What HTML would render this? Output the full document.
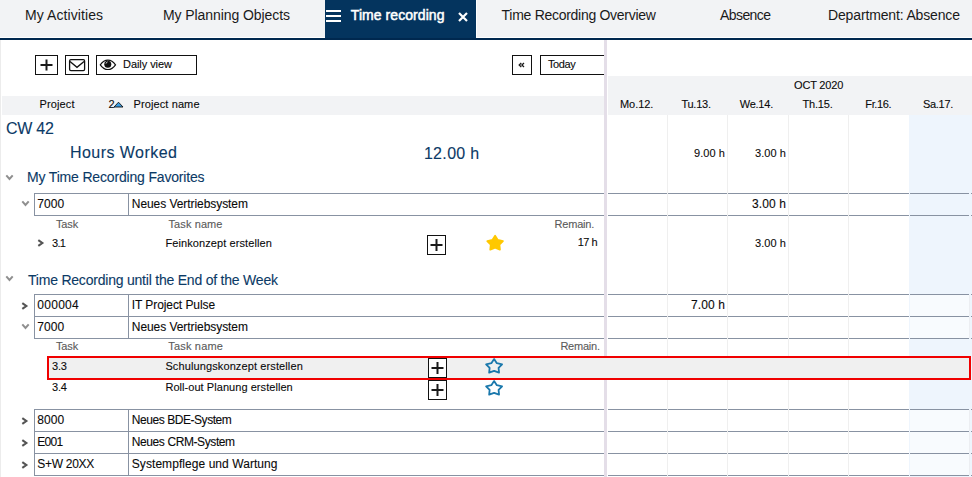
<!DOCTYPE html><html><head><meta charset="utf-8"><style>
html,body{margin:0;padding:0;width:972px;height:477px;overflow:hidden;background:#fff}
body{position:relative;font-family:"Liberation Sans",sans-serif}
div,span,svg{position:absolute}
.t{white-space:nowrap;line-height:1;-webkit-text-stroke:0.1px currentColor}
</style></head><body>
<div style="left:0px;top:0px;width:972px;height:37px;background:#f2f3f5"></div>
<div style="left:0px;top:37px;width:972px;height:1px;background:#ffffff"></div>
<div style="left:0px;top:38px;width:972px;height:2px;background:#00284f"></div>
<div style="left:325px;top:0px;width:151px;height:38px;background:#04345e"></div>
<div style="left:476px;top:0px;width:1px;height:37px;background:#ffffff"></div>
<span class="t" style="left:25.00px;top:8.15px;font-size:14px;color:#0a0a0a;letter-spacing:0.083px;-webkit-text-stroke:0;color:#1a1a1a">My Activities</span>
<span class="t" style="left:163.00px;top:8.15px;font-size:14px;color:#0a0a0a;letter-spacing:-0.078px;-webkit-text-stroke:0;color:#1a1a1a">My Planning Objects</span>
<span class="t" style="left:350.80px;top:8.35px;font-size:14px;color:#ffffff;letter-spacing:0.065px;-webkit-text-stroke:0.5px #fff;">Time recording</span>
<span class="t" style="left:501.60px;top:8.15px;font-size:14px;color:#0a0a0a;letter-spacing:-0.284px;-webkit-text-stroke:0;color:#1a1a1a">Time Recording Overview</span>
<span class="t" style="left:720.00px;top:8.15px;font-size:14px;color:#0a0a0a;letter-spacing:-0.583px;-webkit-text-stroke:0;color:#1a1a1a">Absence</span>
<span class="t" style="left:828.00px;top:8.15px;font-size:14px;color:#0a0a0a;letter-spacing:-0.147px;-webkit-text-stroke:0;color:#1a1a1a">Department: Absence</span>
<div style="left:326px;top:10px;width:15px;height:2px;background:#fff"></div>
<div style="left:326px;top:15px;width:15px;height:2px;background:#fff"></div>
<div style="left:326px;top:20px;width:15px;height:2px;background:#fff"></div>
<svg style="left:456px;top:10px" width="14" height="13" viewBox="0 0 14 13"><path d="M3 3L11 11M11 3L3 11" stroke="#fff" stroke-width="2.2"/></svg>
<div style="left:0px;top:40px;width:1px;height:437px;background:#ececec"></div>
<div style="left:35px;top:55px;width:23px;height:20px;border:1px solid #111;box-sizing:border-box"></div>
<svg style="left:35px;top:55px" width="23" height="20" viewBox="0 0 23 20"><path d="M11.5 4.5V15.5M5.5 10H17.5" stroke="#1a1a1a" stroke-width="2"/></svg>
<div style="left:65px;top:55px;width:24px;height:20px;border:1px solid #111;box-sizing:border-box"></div>
<svg style="left:65px;top:55px" width="24" height="20" viewBox="0 0 24 20"><rect x="4.6" y="4.6" width="15" height="11" rx="1.3" fill="none" stroke="#111" stroke-width="1.3"/><path d="M5 6.6L12 12.3L19 6.6" fill="none" stroke="#111" stroke-width="1.3"/></svg>
<div style="left:96px;top:55px;width:101px;height:20px;border:1px solid #111;box-sizing:border-box"></div>
<svg style="left:99px;top:58px" width="18" height="14" viewBox="0 0 18 14"><path d="M1.3 6.8C3.8 3.3 6.6 2.2 8.9 2.2S14 3.3 16.5 6.8C14 10.4 11.3 11.5 8.9 11.5S3.8 10.4 1.3 6.8Z" fill="none" stroke="#111" stroke-width="1.2"/><circle cx="8.8" cy="6.3" r="3.5" fill="#111"/><path d="M7 5.6A2 2 0 0 1 8.6 3.9" fill="none" stroke="#fff" stroke-width="0.8"/></svg>
<span class="t" style="left:123.00px;top:58.69px;font-size:11px;color:#0a0a0a;letter-spacing:-0.061px;">Daily view</span>
<div style="left:512px;top:55px;width:20px;height:20px;border:1px solid #111;box-sizing:border-box"></div>
<svg style="left:518px;top:62px" width="7" height="6" viewBox="0 0 7 6"><path d="M3.3 1L1.2 3L3.3 5M6 1L3.9 3L6 5" fill="none" stroke="#1a1a1a" stroke-width="1.3"/></svg>
<div style="left:540px;top:55px;width:64px;height:20px;border:1px solid #111;border-right:none;box-sizing:border-box"></div>
<span class="t" style="left:548.00px;top:58.69px;font-size:11px;color:#0a0a0a;letter-spacing:-0.413px;">Today</span>
<div style="left:2px;top:96px;width:602px;height:19px;background:#f2f3f5"></div>
<span class="t" style="left:39.50px;top:98.89px;font-size:11px;color:#0a0a0a;letter-spacing:0.125px;">Project</span>
<span class="t" style="left:108.50px;top:98.89px;font-size:11px;color:#0a0a0a;">2</span>
<svg style="left:113px;top:101px" width="11" height="7" viewBox="0 0 11 7"><path d="M1 6L5.5 1.2L10 6Z" fill="#3a9be0" stroke="#111" stroke-width="0.9"/></svg>
<span class="t" style="left:133.50px;top:98.89px;font-size:11px;color:#0a0a0a;letter-spacing:0.109px;">Project name</span>
<div style="left:608px;top:76px;width:364px;height:39px;background:#f2f3f5"></div>
<span class="t" style="left:794.00px;top:79.69px;font-size:11px;color:#0a0a0a;letter-spacing:-0.179px;">OCT 2020</span>
<div style="left:604px;top:40px;width:3px;height:437px;background:#e4dee8"></div>
<div style="left:909px;top:115px;width:63px;height:362px;background:#eef5fd"></div>
<div style="left:667px;top:115px;width:1px;height:362px;background:#efefef"></div>
<div style="left:727px;top:115px;width:1px;height:362px;background:#efefef"></div>
<div style="left:788px;top:115px;width:1px;height:362px;background:#efefef"></div>
<div style="left:848px;top:115px;width:1px;height:362px;background:#efefef"></div>
<span class="t" style="left:620.00px;top:98.89px;font-size:11px;color:#0a0a0a;letter-spacing:-0.070px;">Mo.12.</span>
<span class="t" style="left:681.40px;top:98.89px;font-size:11px;color:#0a0a0a;letter-spacing:-0.240px;">Tu.13.</span>
<span class="t" style="left:739.70px;top:98.89px;font-size:11px;color:#0a0a0a;letter-spacing:-0.230px;">We.14.</span>
<span class="t" style="left:802.40px;top:98.89px;font-size:11px;color:#0a0a0a;letter-spacing:-0.160px;">Th.15.</span>
<span class="t" style="left:865.30px;top:98.89px;font-size:11px;color:#0a0a0a;letter-spacing:-0.380px;">Fr.16.</span>
<span class="t" style="left:923.00px;top:98.89px;font-size:11px;color:#0a0a0a;letter-spacing:-0.300px;">Sa.17.</span>
<span class="t" style="left:5.90px;top:121.06px;font-size:16px;color:#0b3a66;letter-spacing:-0.250px;">CW 42</span>
<span class="t" style="left:70.00px;top:144.96px;font-size:16px;color:#0b3a66;letter-spacing:0.450px;">Hours Worked</span>
<span class="t" style="left:423.90px;top:146.46px;font-size:16px;color:#0b3a66;letter-spacing:0.333px;">12.00 h</span>
<span class="t" style="left:694.00px;top:147.69px;font-size:11px;color:#0a0a0a;letter-spacing:0.080px;">9.00 h</span>
<span class="t" style="left:755.00px;top:147.69px;font-size:11px;color:#0a0a0a;letter-spacing:0.080px;">3.00 h</span>
<svg style="left:5.2px;top:173.9px" width="9" height="7" viewBox="0 0 9 7"><path d="M1.3 1.3L4.5 4.9L7.7 1.3" fill="none" stroke="#8f8f8f" stroke-width="2"/></svg>
<span class="t" style="left:27.00px;top:169.65px;font-size:14px;color:#0b3a66;letter-spacing:-0.171px;">My Time Recording Favorites</span>
<div style="left:34px;top:193px;width:570px;height:1px;background:#8892a2"></div>
<div style="left:608px;top:193px;width:59px;height:1px;background:#8892a2"></div>
<div style="left:668px;top:193px;width:59px;height:1px;background:#8892a2"></div>
<div style="left:728px;top:193px;width:60px;height:1px;background:#8892a2"></div>
<div style="left:789px;top:193px;width:59px;height:1px;background:#8892a2"></div>
<div style="left:849px;top:193px;width:60px;height:1px;background:#8892a2"></div>
<div style="left:910px;top:193px;width:59px;height:1px;background:#8892a2"></div>
<div style="left:971px;top:193px;width:1px;height:1px;background:#8892a2"></div>
<div style="left:34px;top:215px;width:570px;height:1px;background:#8892a2"></div>
<div style="left:608px;top:215px;width:59px;height:1px;background:#8892a2"></div>
<div style="left:668px;top:215px;width:59px;height:1px;background:#8892a2"></div>
<div style="left:728px;top:215px;width:60px;height:1px;background:#8892a2"></div>
<div style="left:789px;top:215px;width:59px;height:1px;background:#8892a2"></div>
<div style="left:849px;top:215px;width:60px;height:1px;background:#8892a2"></div>
<div style="left:910px;top:215px;width:59px;height:1px;background:#8892a2"></div>
<div style="left:971px;top:215px;width:1px;height:1px;background:#8892a2"></div>
<div style="left:34px;top:193px;width:1px;height:22px;background:#8892a2"></div>
<div style="left:128px;top:193px;width:1px;height:22px;background:#8892a2"></div>
<span class="t" style="left:37.30px;top:197.64px;font-size:12px;color:#0a0a0a;letter-spacing:0.033px;">7000</span>
<span class="t" style="left:131.80px;top:197.64px;font-size:12px;color:#0a0a0a;letter-spacing:-0.063px;">Neues Vertriebsystem</span>
<svg style="left:20.8px;top:200.0px" width="9" height="7" viewBox="0 0 9 7"><path d="M1.3 1.3L4.5 4.9L7.7 1.3" fill="none" stroke="#8f8f8f" stroke-width="2"/></svg>
<span class="t" style="left:752.00px;top:197.64px;font-size:12px;color:#0a0a0a;letter-spacing:0.130px;">3.00 h</span>
<span class="t" style="left:55.90px;top:218.69px;font-size:11px;color:#5a5a5a;letter-spacing:-0.083px;">Task</span>
<span class="t" style="left:168.50px;top:218.69px;font-size:11px;color:#5a5a5a;letter-spacing:0.100px;">Task name</span>
<span class="t" style="left:554.60px;top:218.69px;font-size:11px;color:#5a5a5a;letter-spacing:-0.225px;">Remain.</span>
<svg style="left:37.2px;top:239.2px" width="8" height="8" viewBox="0 0 8 8"><path d="M1.3 1.2L5.3 4L1.3 6.8" fill="none" stroke="#555555" stroke-width="2.1"/></svg>
<span class="t" style="left:52.00px;top:237.59px;font-size:11px;color:#0a0a0a;letter-spacing:-0.650px;">3.1</span>
<span class="t" style="left:165.40px;top:237.59px;font-size:11px;color:#0a0a0a;letter-spacing:0.098px;">Feinkonzept erstellen</span>
<div style="left:427px;top:235px;width:19px;height:20px;border:1.3px solid #111;box-sizing:border-box;background:#fff"></div>
<svg style="left:427px;top:235px" width="19" height="20" viewBox="0 0 19 20"><path d="M9.5 4V16M3.5 10H15.5" stroke="#1a1a1a" stroke-width="2"/></svg>
<svg style="left:484px;top:232px" width="22" height="21" viewBox="0 0 22 21"><path d="M11.10 3.80L13.77 8.00L18.91 9.05L15.41 12.70L15.92 17.55L11.10 15.60L6.28 17.55L6.79 12.70L3.29 9.05L8.43 8.00Z" fill="#ffc800" stroke="#ffc800" stroke-width="1.8" stroke-linejoin="round"/></svg>
<span class="t" style="left:577.70px;top:237.39px;font-size:11px;color:#0a0a0a;letter-spacing:-0.500px;">17 h</span>
<span class="t" style="left:755.00px;top:237.69px;font-size:11px;color:#0a0a0a;letter-spacing:0.080px;">3.00 h</span>
<svg style="left:5.2px;top:275.1px" width="9" height="7" viewBox="0 0 9 7"><path d="M1.3 1.3L4.5 4.9L7.7 1.3" fill="none" stroke="#8f8f8f" stroke-width="2"/></svg>
<span class="t" style="left:28.00px;top:272.85px;font-size:14px;color:#0b3a66;letter-spacing:-0.215px;">Time Recording until the End of the Week</span>
<div style="left:34px;top:294px;width:570px;height:1px;background:#8892a2"></div>
<div style="left:608px;top:294px;width:59px;height:1px;background:#8892a2"></div>
<div style="left:668px;top:294px;width:59px;height:1px;background:#8892a2"></div>
<div style="left:728px;top:294px;width:60px;height:1px;background:#8892a2"></div>
<div style="left:789px;top:294px;width:59px;height:1px;background:#8892a2"></div>
<div style="left:849px;top:294px;width:60px;height:1px;background:#8892a2"></div>
<div style="left:910px;top:294px;width:59px;height:1px;background:#8892a2"></div>
<div style="left:971px;top:294px;width:1px;height:1px;background:#8892a2"></div>
<div style="left:34px;top:316px;width:570px;height:1px;background:#8892a2"></div>
<div style="left:608px;top:316px;width:59px;height:1px;background:#8892a2"></div>
<div style="left:668px;top:316px;width:59px;height:1px;background:#8892a2"></div>
<div style="left:728px;top:316px;width:60px;height:1px;background:#8892a2"></div>
<div style="left:789px;top:316px;width:59px;height:1px;background:#8892a2"></div>
<div style="left:849px;top:316px;width:60px;height:1px;background:#8892a2"></div>
<div style="left:910px;top:316px;width:59px;height:1px;background:#8892a2"></div>
<div style="left:971px;top:316px;width:1px;height:1px;background:#8892a2"></div>
<div style="left:34px;top:338px;width:570px;height:1px;background:#8892a2"></div>
<div style="left:608px;top:338px;width:59px;height:1px;background:#8892a2"></div>
<div style="left:668px;top:338px;width:59px;height:1px;background:#8892a2"></div>
<div style="left:728px;top:338px;width:60px;height:1px;background:#8892a2"></div>
<div style="left:789px;top:338px;width:59px;height:1px;background:#8892a2"></div>
<div style="left:849px;top:338px;width:60px;height:1px;background:#8892a2"></div>
<div style="left:910px;top:338px;width:59px;height:1px;background:#8892a2"></div>
<div style="left:971px;top:338px;width:1px;height:1px;background:#8892a2"></div>
<div style="left:910px;top:295px;width:59px;height:21px;background:#f8fbfe"></div>
<div style="left:969px;top:295px;width:1px;height:21px;background:#eceef2"></div>
<div style="left:910px;top:317px;width:59px;height:21px;background:#f8fbfe"></div>
<div style="left:969px;top:317px;width:1px;height:21px;background:#eceef2"></div>
<div style="left:34px;top:294px;width:1px;height:22px;background:#8892a2"></div>
<div style="left:128px;top:294px;width:1px;height:22px;background:#8892a2"></div>
<span class="t" style="left:37.30px;top:298.64px;font-size:12px;color:#0a0a0a;letter-spacing:0.270px;">000004</span>
<span class="t" style="left:131.80px;top:298.64px;font-size:12px;color:#0a0a0a;letter-spacing:-0.080px;">IT Project Pulse</span>
<svg style="left:21.2px;top:301.8px" width="8" height="8" viewBox="0 0 8 8"><path d="M1.3 1.2L5.3 4L1.3 6.8" fill="none" stroke="#555555" stroke-width="2.1"/></svg>
<span class="t" style="left:691.00px;top:298.84px;font-size:12px;color:#0a0a0a;letter-spacing:0.130px;">7.00 h</span>
<div style="left:34px;top:316px;width:1px;height:22px;background:#8892a2"></div>
<div style="left:128px;top:316px;width:1px;height:22px;background:#8892a2"></div>
<span class="t" style="left:37.30px;top:320.64px;font-size:12px;color:#0a0a0a;letter-spacing:0.033px;">7000</span>
<span class="t" style="left:131.80px;top:320.64px;font-size:12px;color:#0a0a0a;letter-spacing:-0.063px;">Neues Vertriebsystem</span>
<svg style="left:20.8px;top:323.0px" width="9" height="7" viewBox="0 0 9 7"><path d="M1.3 1.3L4.5 4.9L7.7 1.3" fill="none" stroke="#8f8f8f" stroke-width="2"/></svg>
<span class="t" style="left:55.90px;top:341.29px;font-size:11px;color:#5a5a5a;letter-spacing:-0.083px;">Task</span>
<span class="t" style="left:168.20px;top:341.29px;font-size:11px;color:#5a5a5a;letter-spacing:0.200px;">Task name</span>
<span class="t" style="left:560.40px;top:341.29px;font-size:11px;color:#5a5a5a;letter-spacing:-0.225px;">Remain.</span>
<div style="left:47px;top:356px;width:924px;height:24px;border:2px solid #f00000;box-sizing:border-box;background:#f0f0f0"></div>
<span class="t" style="left:52.10px;top:360.69px;font-size:11px;color:#0a0a0a;letter-spacing:-0.300px;">3.3</span>
<span class="t" style="left:165.40px;top:360.69px;font-size:11px;color:#0a0a0a;letter-spacing:0.114px;">Schulungskonzept erstellen</span>
<div style="left:428px;top:358px;width:19px;height:20px;border:1.3px solid #111;box-sizing:border-box;background:#fff"></div>
<svg style="left:428px;top:358px" width="19" height="20" viewBox="0 0 19 20"><path d="M9.5 4V16M3.5 10H15.5" stroke="#1a1a1a" stroke-width="2"/></svg>
<svg style="left:484px;top:355px" width="22" height="21" viewBox="0 0 22 21"><path d="M10.10 4.10L12.86 8.20L18.09 9.28L14.57 12.90L15.04 17.67L10.10 15.80L5.16 17.67L5.63 12.90L2.11 9.28L7.34 8.20Z" fill="none" stroke="#1a78ac" stroke-width="1.8" stroke-linejoin="round"/></svg>
<span class="t" style="left:52.10px;top:381.69px;font-size:11px;color:#0a0a0a;letter-spacing:-0.300px;">3.4</span>
<span class="t" style="left:165.40px;top:381.69px;font-size:11px;color:#0a0a0a;letter-spacing:0.054px;">Roll-out Planung erstellen</span>
<div style="left:428px;top:380px;width:19px;height:20px;border:1.3px solid #111;box-sizing:border-box;background:#fff"></div>
<svg style="left:428px;top:380px" width="19" height="20" viewBox="0 0 19 20"><path d="M9.5 4V16M3.5 10H15.5" stroke="#1a1a1a" stroke-width="2"/></svg>
<svg style="left:484px;top:377px" width="22" height="21" viewBox="0 0 22 21"><path d="M10.10 4.10L12.86 8.20L18.09 9.28L14.57 12.90L15.04 17.67L10.10 15.80L5.16 17.67L5.63 12.90L2.11 9.28L7.34 8.20Z" fill="none" stroke="#1a78ac" stroke-width="1.8" stroke-linejoin="round"/></svg>
<div style="left:34px;top:409px;width:570px;height:1px;background:#8892a2"></div>
<div style="left:608px;top:409px;width:59px;height:1px;background:#8892a2"></div>
<div style="left:668px;top:409px;width:59px;height:1px;background:#8892a2"></div>
<div style="left:728px;top:409px;width:60px;height:1px;background:#8892a2"></div>
<div style="left:789px;top:409px;width:59px;height:1px;background:#8892a2"></div>
<div style="left:849px;top:409px;width:60px;height:1px;background:#8892a2"></div>
<div style="left:910px;top:409px;width:59px;height:1px;background:#8892a2"></div>
<div style="left:971px;top:409px;width:1px;height:1px;background:#8892a2"></div>
<div style="left:34px;top:431px;width:570px;height:1px;background:#8892a2"></div>
<div style="left:608px;top:431px;width:59px;height:1px;background:#8892a2"></div>
<div style="left:668px;top:431px;width:59px;height:1px;background:#8892a2"></div>
<div style="left:728px;top:431px;width:60px;height:1px;background:#8892a2"></div>
<div style="left:789px;top:431px;width:59px;height:1px;background:#8892a2"></div>
<div style="left:849px;top:431px;width:60px;height:1px;background:#8892a2"></div>
<div style="left:910px;top:431px;width:59px;height:1px;background:#8892a2"></div>
<div style="left:971px;top:431px;width:1px;height:1px;background:#8892a2"></div>
<div style="left:34px;top:453px;width:570px;height:1px;background:#8892a2"></div>
<div style="left:608px;top:453px;width:59px;height:1px;background:#8892a2"></div>
<div style="left:668px;top:453px;width:59px;height:1px;background:#8892a2"></div>
<div style="left:728px;top:453px;width:60px;height:1px;background:#8892a2"></div>
<div style="left:789px;top:453px;width:59px;height:1px;background:#8892a2"></div>
<div style="left:849px;top:453px;width:60px;height:1px;background:#8892a2"></div>
<div style="left:910px;top:453px;width:59px;height:1px;background:#8892a2"></div>
<div style="left:971px;top:453px;width:1px;height:1px;background:#8892a2"></div>
<div style="left:34px;top:475px;width:570px;height:1px;background:#8892a2"></div>
<div style="left:608px;top:475px;width:59px;height:1px;background:#8892a2"></div>
<div style="left:668px;top:475px;width:59px;height:1px;background:#8892a2"></div>
<div style="left:728px;top:475px;width:60px;height:1px;background:#8892a2"></div>
<div style="left:789px;top:475px;width:59px;height:1px;background:#8892a2"></div>
<div style="left:849px;top:475px;width:60px;height:1px;background:#8892a2"></div>
<div style="left:910px;top:475px;width:59px;height:1px;background:#8892a2"></div>
<div style="left:971px;top:475px;width:1px;height:1px;background:#8892a2"></div>
<div style="left:910px;top:410px;width:59px;height:21px;background:#f8fbfe"></div>
<div style="left:969px;top:410px;width:1px;height:21px;background:#eceef2"></div>
<div style="left:910px;top:432px;width:59px;height:21px;background:#f8fbfe"></div>
<div style="left:969px;top:432px;width:1px;height:21px;background:#eceef2"></div>
<div style="left:910px;top:454px;width:59px;height:21px;background:#f8fbfe"></div>
<div style="left:969px;top:454px;width:1px;height:21px;background:#eceef2"></div>
<div style="left:34px;top:409px;width:1px;height:22px;background:#8892a2"></div>
<div style="left:128px;top:409px;width:1px;height:22px;background:#8892a2"></div>
<span class="t" style="left:37.30px;top:413.64px;font-size:12px;color:#0a0a0a;letter-spacing:0.100px;">8000</span>
<span class="t" style="left:131.80px;top:413.64px;font-size:12px;color:#0a0a0a;letter-spacing:-0.447px;">Neues BDE-System</span>
<svg style="left:21.2px;top:416.8px" width="8" height="8" viewBox="0 0 8 8"><path d="M1.3 1.2L5.3 4L1.3 6.8" fill="none" stroke="#555555" stroke-width="2.1"/></svg>
<div style="left:34px;top:431px;width:1px;height:22px;background:#8892a2"></div>
<div style="left:128px;top:431px;width:1px;height:22px;background:#8892a2"></div>
<span class="t" style="left:37.30px;top:435.64px;font-size:12px;color:#0a0a0a;letter-spacing:-0.683px;">E001</span>
<span class="t" style="left:131.80px;top:435.64px;font-size:12px;color:#0a0a0a;letter-spacing:-0.403px;">Neues CRM-System</span>
<svg style="left:21.2px;top:438.8px" width="8" height="8" viewBox="0 0 8 8"><path d="M1.3 1.2L5.3 4L1.3 6.8" fill="none" stroke="#555555" stroke-width="2.1"/></svg>
<div style="left:34px;top:453px;width:1px;height:22px;background:#8892a2"></div>
<div style="left:128px;top:453px;width:1px;height:22px;background:#8892a2"></div>
<span class="t" style="left:37.30px;top:457.64px;font-size:12px;color:#0a0a0a;letter-spacing:-0.293px;">S+W 20XX</span>
<span class="t" style="left:131.80px;top:457.64px;font-size:12px;color:#0a0a0a;letter-spacing:0.061px;">Systempflege und Wartung</span>
<svg style="left:21.2px;top:460.8px" width="8" height="8" viewBox="0 0 8 8"><path d="M1.3 1.2L5.3 4L1.3 6.8" fill="none" stroke="#555555" stroke-width="2.1"/></svg>
</body></html>
